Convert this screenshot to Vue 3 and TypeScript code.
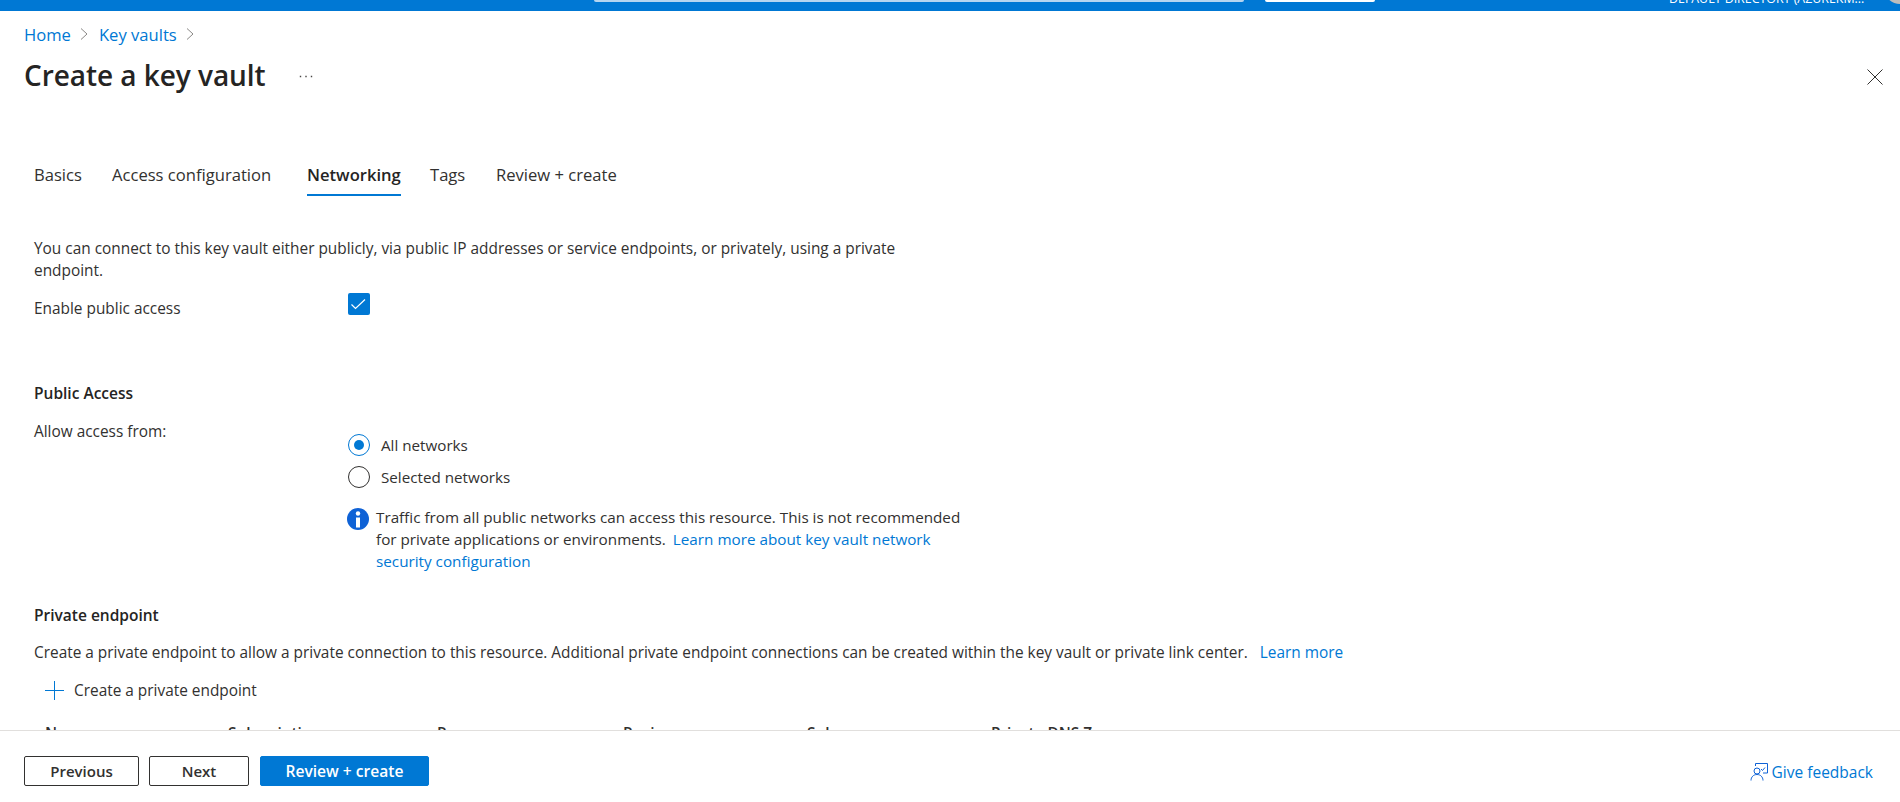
<script setup lang="ts">
const tabs: { label: string; active?: boolean }[] = [
  { label: 'Basics' },
  { label: 'Access configuration' },
  { label: 'Networking', active: true },
  { label: 'Tags' },
  { label: 'Review + create' },
]
const columns: string[] = ['Name', 'Subscription', 'Resource group', 'Region', 'Subresource', 'Private DNS Zone']
</script>

<template>
  <div class="page">
    <header class="topbar">
      <div class="search"></div>
      <div class="topbtn"></div>
      <div class="account">DEFAULT DIRECTORY (AZUREKM...</div>
      <div class="avatar"></div>
    </header>

    <div class="head">
      <nav class="crumbs">
        <a>Home</a>
        <svg width="8" height="12" viewBox="0 0 8 12"><path d="M1 .5l6 5.500-6 5.500" fill="none" stroke="#8a8886" /></svg>
        <a class="second">Key vaults</a>
        <svg width="8" height="12" viewBox="0 0 8 12"><path d="M1 .5l6 5.500-6 5.500" fill="none" stroke="#8a8886" /></svg>
      </nav>
      <div class="title-row">
        <h1>Create a key vault</h1>
        <svg class="dots" width="14" height="3" viewBox="0 0 14 3"><path d="M.8 1.500h1.400M6.300 1.500h1.400M11.800 1.500h1.400" stroke="#484644" stroke-width="1.400" /></svg>
        <svg class="close" width="16" height="16" viewBox="0 0 16 16"><path d="M.5.500l15 15M15.500.500l-15 15" stroke="#323130" stroke-width="1" fill="none" /></svg>
      </div>
    </div>

    <main class="content">
      <div class="tabs">
        <div v-for="t in tabs" :key="t.label" class="tab" :class="{ active: t.active }">{{ t.label }}</div>
      </div>

      <p class="intro">You can connect to this key vault either publicly, via public IP addresses or service endpoints, or privately, using a private endpoint.</p>

      <div class="row enable">
        <div class="label">Enable public access</div>
        <div class="checkbox">
          <svg width="22" height="22" viewBox="0 0 22 22"><path d="M3.500 11.500l4 4L17 6.500" fill="none" stroke="#fff" stroke-width="1.200" /></svg>
        </div>
      </div>

      <h2 class="h-public">Public Access</h2>

      <div class="row allow">
        <div class="label">Allow access from:</div>
        <div class="options">
          <div class="radio-line">
            <span class="radio on"><i></i></span>
            <span>All networks</span>
          </div>
          <div class="radio-line">
            <span class="radio"></span>
            <span>Selected networks</span>
          </div>
          <div class="info">
            <svg width="22" height="22" viewBox="0 0 22 22">
              <circle cx="11" cy="11" r="11" fill="#0f62d6" />
              <circle cx="11" cy="5.500" r="2.200" fill="#fff" />
              <rect x="9" y="9.500" width="4" height="10" fill="#fff" />
            </svg>
            <p>Traffic from all public networks can access this resource. This is not recommended for private applications or environments. <a class="learn">Learn more about key vault network security configuration</a></p>
          </div>
        </div>
      </div>

      <h2 class="h-private">Private endpoint</h2>
      <p class="desc">Create a private endpoint to allow a private connection to this resource. Additional private endpoint connections can be created within the key vault or private link center. <a class="more">Learn more</a></p>

      <div class="create">
        <svg width="19" height="19" viewBox="0 0 19 19"><path d="M9.500 0v19M0 9.500h19" stroke="#0078d4" stroke-width="1" fill="none" /></svg>
        <span>Create a private endpoint</span>
      </div>

      <div class="cols">
        <span v-for="c in columns" :key="c">{{ c }}</span>
      </div>
    </main>

    <footer class="footer">
      <button class="btn prev">Previous</button>
      <button class="btn next">Next</button>
      <button class="btn primary">Review + create</button>
      <a class="feedback">
        <svg width="18" height="18" viewBox="0 0 18 18" fill="none" stroke="#0f62d6" stroke-width="1">
          <path d="M5.500 3V.500h12v9.500H13" />
          <circle cx="7" cy="8" r="3" />
          <path d="M1 17.500c0-3.500 2.500-6 6-6s6 2.500 6 6" />
          <path d="M11 6l1.500 1.500L15 4.500" />
        </svg>
        <span>Give feedback</span>
      </a>
    </footer>
  </div>
</template>

<style>
html, body { margin: 0; padding: 0; background: #fff; overflow: hidden; }
</style>

<style scoped>
.page {
  height: 802px;
  width: 1900px;
  display: flex;
  flex-direction: column;
  overflow: hidden;
  font-family: "Open Sans", "Noto Sans", sans-serif;
  font-size: 15.4px;
  color: #323130;
  background: #fff;
}
a { color: #0078d4; }
p { margin: 0; }
.topbar {
  height: 11px;
  flex: none;
  background: #0078d4;
  position: relative;
  overflow: hidden;
}
.search { position: absolute; left: 594px; top: -10px; width: 650px; height: 12px; background: #b5d5f0; border-radius: 2px; }
.topbtn { position: absolute; left: 1265px; top: -10px; width: 110px; height: 12px; background: #fff; border-radius: 2px; }
.account { position: absolute; left: 1669px; top: -8px; color: #fff; font-size: 12.400px; line-height: 14px; white-space: nowrap; }
.avatar { position: absolute; left: 1884px; top: -28px; width: 32px; height: 32px; border-radius: 50%; background: #bdbdbd; }
.head { padding: 13px 24px 0; flex: none; }
.crumbs { display: flex; align-items: center; gap: 9px; font-size: 16.600px; height: 20px; }
.second { margin-left: 2px; }
.title-row { display: flex; align-items: center; margin-top: 13px; height: 36px; }
h1 { margin: 0; font-size: 28px; font-weight: 600; color: #252423; letter-spacing: -0.05px; line-height: 36px; }
.dots { margin-left: 33px; margin-top: 2px; }
.close { margin-left: auto; margin-right: -7px; margin-top: 3px; }
.content { flex: 1; min-height: 0; overflow: hidden; padding: 0 34px; }
.tabs { display: grid; grid-template-columns: 78px 195px 123px 66px auto; margin-top: 66px; height: 37px; font-size: 16.600px; }
.tab { height: 37px; line-height: 32px; box-sizing: border-box; justify-self: start; white-space: nowrap; }
.tab.active { font-weight: 600; border-bottom: 2px solid #0078d4; color: #252423; }
.intro { width: 900px; margin-top: 42px; line-height: 22px; }
.row { display: flex; }
.label { width: 314px; flex: none; line-height: 22px; }
.enable { margin-top: 11px; height: 22px; }
.enable .label { padding-top: 5px; }
.checkbox { width: 22px; height: 22px; background: #0078d4; border-radius: 2px; }
.checkbox svg { display: block; }
h2 { margin: 0; font-size: 15.500px; font-weight: 600; color: #252423; line-height: 20px; }
.h-public { margin-top: 68px; }
.allow { margin-top: 18px; }
.options { padding-top: 13px; font-size: 15.200px; }
.radio-line { display: flex; align-items: center; height: 22px; margin-bottom: 10px; gap: 11px; }
.radio { width: 22px; height: 22px; box-sizing: border-box; border: 1px solid #323130; border-radius: 50%; display: flex; align-items: center; justify-content: center; }
.radio.on { border-color: #0078d4; }
.radio i { width: 10px; height: 10px; border-radius: 50%; background: #0078d4; display: block; }
.info { display: flex; gap: 7px; margin-top: 19px; margin-left: -1px; font-size: 15.250px; }
.info svg { flex: none; margin-top: 1px; }
.info p { line-height: 22px; width: 590px; margin-top: -1px; margin-bottom: 1px; }
.learn { margin-left: 3px; }
.h-private { margin-top: 32px; }
.desc { margin-top: 17px; line-height: 22px; white-space: nowrap; }
.more { margin-left: 8px; }
.create { display: flex; align-items: center; gap: 10px; margin: 15px 0 0 11px; height: 22px; }
.cols { display: grid; grid-template-columns: 183px 209px 186px 184px 184px auto; margin: 22px 0 0 11px; white-space: nowrap; line-height: 22px; font-weight: 600; }
.footer {
  flex: none;
  height: 72px;
  box-sizing: border-box;
  border-top: 1px solid #e1dfdd;
  display: flex;
  align-items: flex-start;
  padding: 25px 27px 0 24px;
  gap: 10px;
  background: #fff;
}
.btn {
  height: 30px;
  box-sizing: border-box;
  border: 1px solid #323130;
  background: #fff;
  border-radius: 2px;
  font: 600 15px "Open Sans", sans-serif;
  color: #323130;
  padding: 0;
}
.prev { width: 115px; }
.next { width: 100px; }
.primary { width: 169px; background: #0078d4; border-color: #0078d4; color: #fff; margin-left: 1px; font-size: 15.600px; }
.feedback { margin-left: auto; display: flex; align-items: center; gap: 4px; font-size: 15.500px; margin-top: 5px; }
.feedback svg { flex: none; }
</style>
